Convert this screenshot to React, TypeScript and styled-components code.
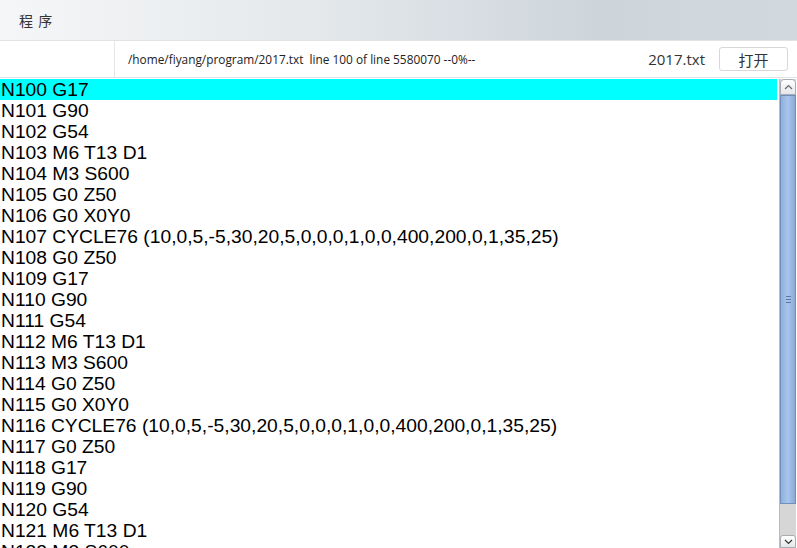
import styled, { createGlobalStyle } from 'styled-components';

const GlobalStyle = createGlobalStyle`
  html, body {
    margin: 0;
    padding: 0;
    background: #ffffff;
    overflow: hidden;
  }
`;

const cycle = '(10,0,5,-5,30,20,5,0,0,0,1,0,0,400,200,0,1,35,25)';
const pattern = [
  'G17',
  'G90',
  'G54',
  'M6 T13 D1',
  'M3 S600',
  'G0 Z50',
  'G0 X0Y0',
  `CYCLE76 ${cycle}`,
  'G0 Z50',
];

const lines = Array.from({ length: 24 }, (_, i) => `N${100 + i} ${pattern[i % 9]}`);

const App = () => {
  return (
    <Page>
      <GlobalStyle />
      <TabBar>
        <Tab>程 序</Tab>
      </TabBar>
      <InfoRow>
        <Blank />
        <PathText>/home/fiyang/program/2017.txt&nbsp;&nbsp;line 100 of line 5580070 --0%--</PathText>
        <FileName>2017.txt</FileName>
        <OpenButton>打开</OpenButton>
      </InfoRow>
      <Body>
        <List>
          {lines.map((line, i) => (
            <Line key={line} $active={i === 0}>
              {line}
            </Line>
          ))}
        </List>
        <ScrollBar>
          <ArrowButton>
            <svg width="9" height="6" viewBox="0 0 9 6">
              <path d="M1 5 L4.5 1.5 L8 5" fill="none" stroke="#6b6b6b" strokeWidth="1.2" />
            </svg>
          </ArrowButton>
          <Thumb>
            <Grip>
              <span />
              <span />
              <span />
            </Grip>
          </Thumb>
          <Track />
          <ArrowButton $down>
            <svg width="9" height="6" viewBox="0 0 9 6">
              <path d="M1 1 L4.5 4.5 L8 1" fill="none" stroke="#333" strokeWidth="1.2" />
            </svg>
          </ArrowButton>
        </ScrollBar>
      </Body>
    </Page>
  );
};

const Page = styled.div`
  width: 797px;
  height: 548px;
  display: flex;
  flex-direction: column;
  overflow: hidden;
  font-family: 'Open Sans', 'Noto Sans CJK SC', sans-serif;
`;

const TabBar = styled.div`
  height: 40px;
  flex-shrink: 0;
  display: flex;
  align-items: center;
  background: linear-gradient(to right, #f5f6f7 0%, #e4e8eb 40%, #cdd5db 75%, #d2d9de 100%);
  border-bottom: 1px solid #dfe3e6;
`;

const Tab = styled.div`
  padding-left: 19px;
  font-size: 14px;
  color: #333;
  letter-spacing: 1px;
  font-family: 'Noto Sans CJK SC', sans-serif;
`;

const InfoRow = styled.div`
  height: 36px;
  flex-shrink: 0;
  display: flex;
  align-items: center;
  background: #ffffff;
  border-bottom: 1px solid #dde3e8;
`;

const Blank = styled.div`
  width: 114px;
  height: 100%;
  border-right: 1px solid #e6e6e6;
`;

const PathText = styled.div`
  flex: 1;
  padding-left: 13px;
  font-size: 11.85px;
  color: #222;
  white-space: nowrap;
`;

const FileName = styled.div`
  height: 100%;
  display: flex;
  align-items: center;
  font-size: 15px;
  color: #333;
  margin-right: 14px;
`;

const OpenButton = styled.button`
  width: 69px;
  height: 24px;
  margin-right: 9px;
  background: #fff;
  border: 1px solid #d8d8d8;
  border-radius: 3px;
  font-family: 'Noto Sans CJK SC', sans-serif;
  font-size: 15px;
  color: #333;
  padding: 0;
`;

const Body = styled.div`
  flex: 1;
  display: flex;
  padding-top: 1px;
  min-height: 0;
`;

const List = styled.div`
  flex: 1;
  overflow: hidden;
  padding-right: 2px;
`;

const Line = styled.div<{ $active: boolean }>`
  height: 21px;
  line-height: 21px;
  padding-left: 1px;
  font-family: 'Liberation Sans', Arial, sans-serif;
  font-size: 19.25px;
  color: #000;
  white-space: nowrap;
  background: ${(p) => (p.$active ? '#00ffff' : 'transparent')};
`;

const ScrollBar = styled.div`
  width: 16px;
  margin-right: 1px;
  display: flex;
  flex-direction: column;
  border-left: 1px solid #b9bdc2;
  background: #d6d6d6;
`;

const ArrowButton = styled.div<{ $down?: boolean }>`
  height: ${(p) => (p.$down ? '11px' : '14px')};
  flex-shrink: 0;
  display: flex;
  align-items: center;
  justify-content: center;
  background: linear-gradient(to bottom, #ffffff, #e4e7ea);
  border: 1px solid #a9adb2;
  border-radius: ${(p) => (p.$down ? '3px 3px 0 0' : '4px 4px 0 0')};
`;

const Thumb = styled.div`
  height: 407px;
  flex-shrink: 0;
  display: flex;
  align-items: center;
  justify-content: center;
  background: linear-gradient(to right, #8fb0dc, #a9c5ec 50%, #8aaad6);
  border: 1px solid #6f8fbf;
`;

const Grip = styled.div`
  display: flex;
  flex-direction: column;
  gap: 2px;

  span {
    width: 5px;
    height: 1px;
    background: #5a77a6;
  }
`;

const Track = styled.div`
  flex: 1;
  background: #d6d6d6;
`;

export default App;
